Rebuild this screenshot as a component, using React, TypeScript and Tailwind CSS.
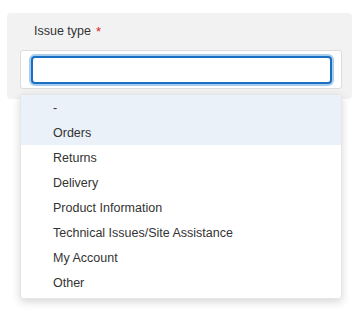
export default function App() {
  const options = [
    '-',
    'Orders',
    'Returns',
    'Delivery',
    'Product Information',
    'Technical Issues/Site Assistance',
    'My Account',
    'Other',
  ]

  return (
    <div className="w-[359px] h-[311px] bg-white pt-[13px] pl-[7px] font-['Liberation_Sans',Arial,sans-serif] text-[#333]">
      <div className="relative w-[345px] h-[86px] rounded-[4px] bg-[#f2f2f2] pt-[10px] pl-[13px]">
        <label className="flex items-center h-[16px] pl-[14px] text-[12.5px] leading-none text-[#333]">
          Issue type
          <span className="ml-[5px] text-[#e02020] text-[13px]">*</span>
        </label>
        <div className="mt-[11px] w-[322px] h-[39px] rounded-[3px] border border-[#dcdcdc] bg-white px-[10px] pt-[5px]">
          <input
            className="block w-[301px] h-[28px] rounded-[4px] border-2 border-[#1a6fc2] bg-white outline-none ring-2 ring-[#a9cdee]"
            readOnly
          />
        </div>

        <div className="absolute left-[13px] top-[81px] w-[322px] rounded-[3px] bg-white pb-[3px] shadow-[0_3px_8px_rgba(0,0,0,0.16)] border border-[#e6e6e6] overflow-hidden">
          {options.map((opt, i) => (
            <div
              key={opt}
              className={
                i < 2
                  ? 'h-[25px] flex items-center pt-[2px] pl-[32px] text-[12.5px] bg-[#eaf1f9]'
                  : 'h-[25px] flex items-center pt-[2px] pl-[32px] text-[12.5px]'
              }
            >
              {opt}
            </div>
          ))}
        </div>
      </div>
    </div>
  )
}
